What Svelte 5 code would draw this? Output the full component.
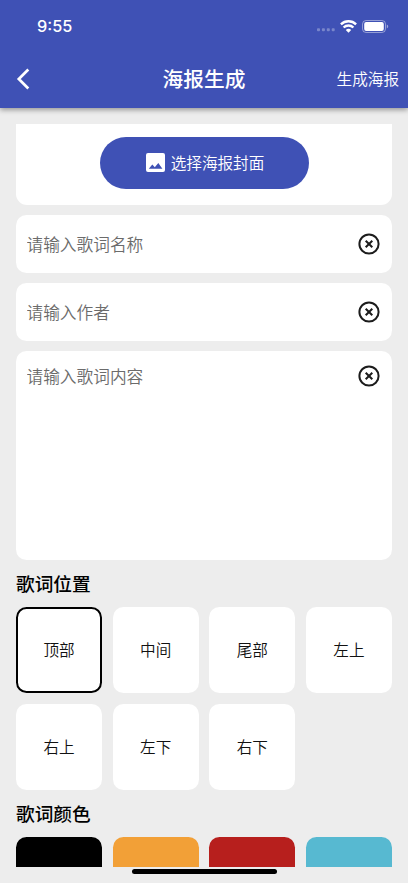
<script lang="ts">
	/**
	 * Poster generator form: cover picker, lyric fields,
	 * then the lyric position and colour choices.
	 */

	const positions = ['顶部', '中间', '尾部', '左上', '右上', '左下', '右下'];
	const colors = ['#000000', '#f2a037', '#b71f1d', '#57b9d1'];

	let name = $state('');
	let author = $state('');
	let content = $state('');
	let position = $state('顶部');
	let color = $state('#000000');
</script>

{#snippet clearButton(label: string, onclear: () => void)}
	<button class="clear-btn" aria-label={label} onclick={onclear}>
		<svg viewBox="0 0 22 22" width="22" height="22">
			<circle cx="11" cy="11" r="9.6" />
			<path d="M7.7 7.7l6.6 6.6M14.3 7.7l-6.6 6.6" />
		</svg>
	</button>
{/snippet}

<div class="screen">
	<header>
		<div class="status-bar">
			<span class="time">9:55</span>
			<div class="status-icons">
				<svg class="signal" viewBox="0 0 18 4" width="18" height="4">
					<rect x="0" y="0.2" width="3" height="3" rx="0.9" />
					<rect x="4.9" y="0.2" width="3" height="3" rx="0.9" />
					<rect x="9.8" y="0.2" width="3" height="3" rx="0.9" />
					<rect x="14.7" y="0.2" width="3" height="3" rx="0.9" />
				</svg>
				<svg class="wifi" viewBox="0 0 17 13" width="17" height="13">
					<path d="M0.9 4.4a10.9 10.9 0 0 1 15.2 0" />
					<path d="M3.6 7.5a7 7 0 0 1 9.8 0" />
					<path class="dot" d="M5.8 10a3.9 3.9 0 0 1 5.4 0L8.5 12.8z" />
				</svg>
				<svg class="battery" viewBox="0 0 27 13" width="27" height="13">
					<rect class="shell" x="0.5" y="0.5" width="23" height="12" rx="3.6" />
					<rect x="2.2" y="2.1" width="19.6" height="8.8" rx="2" />
					<path class="cap" d="M24.8 4.6c1.9.8 1.9 3 0 3.8z" />
				</svg>
			</div>
		</div>
		<nav>
			<button class="back-btn" aria-label="返回">
				<svg viewBox="0 0 14 22" width="14" height="22">
					<path d="M12.3 1.5L2.8 11l9.5 9.5" />
				</svg>
			</button>
			<h1>海报生成</h1>
			<button class="generate-btn">生成海报</button>
		</nav>
	</header>

	<main>
		<section class="cover">
			<button class="cover-btn">
				<svg viewBox="0 0 19 19" width="19" height="19">
					<path
						fill-rule="evenodd"
						d="M2 0h15a2 2 0 0 1 2 2v15a2 2 0 0 1-2 2H2a2 2 0 0 1-2-2V2a2 2 0 0 1 2-2zM2.8 15.8h13.6l-4.1-5.9-3.5 4.4-2.5-2.8z"
					/>
				</svg>
				<span>选择海报封面</span>
			</button>
		</section>

		<div class="field">
			<input type="text" placeholder="请输入歌词名称" bind:value={name} />
			{@render clearButton('清空歌词名称', () => (name = ''))}
		</div>
		<div class="field">
			<input type="text" placeholder="请输入作者" bind:value={author} />
			{@render clearButton('清空作者', () => (author = ''))}
		</div>
		<div class="field multiline">
			<textarea placeholder="请输入歌词内容" bind:value={content}></textarea>
			{@render clearButton('清空歌词内容', () => (content = ''))}
		</div>

		<h2>歌词位置</h2>
		<div class="grid">
			{#each positions as item}
				<button class="tile" class:selected={position === item} onclick={() => (position = item)}>
					{item}
				</button>
			{/each}
		</div>

		<h2>歌词颜色</h2>
		<div class="grid">
			{#each colors as item}
				<button
					class="tile"
					class:selected={color === item}
					style="background: {item}"
					aria-label={item}
					onclick={() => (color = item)}
				></button>
			{/each}
		</div>
	</main>

	<footer>
		<div class="home-indicator"></div>
	</footer>
</div>

<style>
	:global(body) {
		margin: 0;
	}
	.screen {
		--primary: #3f51b5;
		display: flex;
		flex-direction: column;
		box-sizing: border-box;
		height: 883px;
		overflow: hidden;
		background: #ededed;
		color: #111;
		font-family: 'Noto Sans CJK SC', sans-serif;
		font-weight: 350;
	}
	button {
		padding: 0;
		border: none;
		background: none;
		color: inherit;
		font: inherit;
		cursor: pointer;
	}
	svg {
		display: block;
		flex: none;
	}

	header {
		flex: none;
		height: 108px;
		background: var(--primary);
		color: #fff;
		box-shadow: 0 2px 5px rgba(0, 0, 0, 0.36);
	}
	.status-bar {
		display: flex;
		align-items: center;
		justify-content: space-between;
		height: 52px;
		padding: 0 19px 0 37px;
	}
	.time {
		font-family: Inter, sans-serif;
		font-size: 16.3px;
		font-weight: 500;
	}
	.status-icons {
		display: flex;
		align-items: center;
		gap: 5px;
	}
	.signal {
		margin-top: 8px;
		fill: #fff;
		opacity: 0.3;
	}
	.wifi {
		fill: none;
		stroke: #fff;
		stroke-width: 2.4;
	}
	.wifi .dot {
		fill: #fff;
		stroke: none;
	}
	.battery {
		fill: #fff;
	}
	.battery .shell {
		fill: none;
		stroke: #fff;
		stroke-opacity: 0.45;
	}
	.battery .cap {
		fill-opacity: 0.5;
	}
	nav {
		display: grid;
		grid-template-columns: 1fr auto 1fr;
		align-items: center;
		height: 54px;
		padding: 0 9px 0 16px;
	}
	.back-btn {
		justify-self: start;
	}
	.back-btn path {
		fill: none;
		stroke: #fff;
		stroke-width: 2.7;
	}
	h1 {
		margin: 0 0 2px -7px;
		font-size: 20.7px;
		font-weight: 500;
		line-height: 30px;
	}
	.generate-btn {
		justify-self: end;
		margin-bottom: 2px;
		font-size: 15.6px;
	}

	main {
		flex: 1;
		min-height: 0;
		margin: 16px 16px 0;
		overflow: hidden;
	}
	.cover {
		display: flex;
		justify-content: center;
		box-sizing: border-box;
		height: 80.5px;
		padding-top: 12.5px;
		border-radius: 0 0 11px 11px;
		background: #fff;
	}
	.cover-btn {
		display: flex;
		align-items: center;
		justify-content: center;
		gap: 6px;
		box-sizing: border-box;
		width: 209px;
		height: 52px;
		padding-left: 2px;
		border-radius: 26px;
		background: var(--primary);
		color: #fff;
		font-size: 15.6px;
	}
	.cover-btn svg {
		fill: #fff;
	}
	.cover-btn span {
		margin-bottom: 1px;
	}
	.field {
		display: flex;
		align-items: center;
		box-sizing: border-box;
		height: 57.5px;
		margin-top: 10.5px;
		padding: 0 12px 0 10.5px;
		border-radius: 10.5px;
		background: #fff;
	}
	.multiline {
		align-items: flex-start;
		height: 209px;
		padding-top: 14px;
	}
	input,
	textarea {
		flex: 1;
		min-width: 0;
		padding: 0;
		border: none;
		outline: none;
		background: none;
		color: inherit;
		font: inherit;
		font-size: 16.7px;
		line-height: 24px;
	}
	textarea {
		height: 180px;
		margin-top: -1px;
		resize: none;
	}
	input::placeholder,
	textarea::placeholder {
		color: #6b6b6b;
	}
	.clear-btn svg {
		fill: none;
		stroke: #1c1c1c;
		stroke-width: 2;
	}
	h2 {
		margin: 9px 0 11px;
		font-size: 18.7px;
		font-weight: 500;
		line-height: 27px;
		color: #000;
	}
	.grid {
		display: grid;
		grid-template-columns: repeat(4, 86px);
		justify-content: space-between;
		row-gap: 11px;
	}
	.tile {
		box-sizing: border-box;
		height: 86px;
		padding-bottom: 2px;
		border-radius: 10.5px;
		background: #fff;
		font-size: 15.6px;
	}
	.tile.selected {
		border: 2px solid #000;
	}

	footer {
		flex: none;
		display: flex;
		justify-content: center;
		height: 16px;
	}
	.home-indicator {
		width: 145px;
		height: 5px;
		margin-top: 2px;
		border-radius: 3px;
		background: #000;
	}
</style>
